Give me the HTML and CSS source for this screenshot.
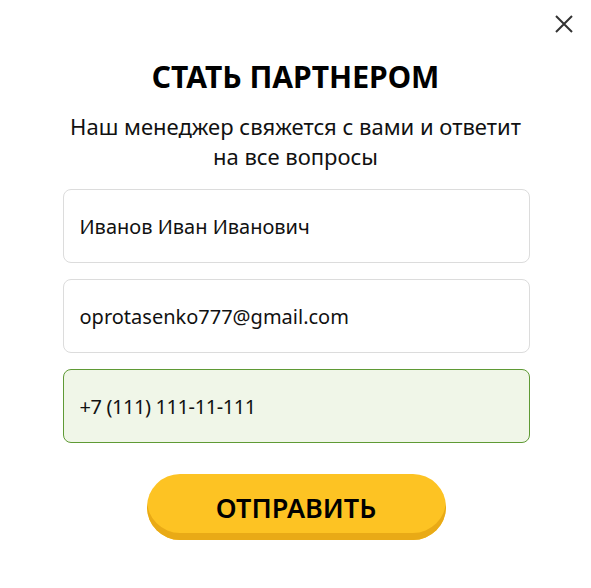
FILE: index.html
```html
<!DOCTYPE html>
<html lang="ru">
<head>
    <meta charset="UTF-8">
    <meta name="viewport" content="width=device-width, initial-scale=1.0">
    <title>Стать партнером</title>
    <link rel="stylesheet" href="styles.css">
</head>
<body>
    <div class="modal">
        <button class="close" aria-label="Закрыть">
            <svg width="18" height="18" viewBox="0 0 18 18">
                <path d="M1 1 L17 17 M17 1 L1 17" stroke="#333" stroke-width="2" fill="none"/>
            </svg>
        </button>

        <h1>СТАТЬ ПАРТНЕРОМ</h1>
        <p class="lead">Наш менеджер свяжется с вами и ответит<br>на все вопросы</p>

        <form class="form">
            <input type="text" class="field" value="Иванов Иван Иванович">
            <input type="text" class="field" value="oprotasenko777@gmail.com">
            <input type="text" class="field valid" value="+7 (111) 111-11-111">
            <button type="button" class="submit">ОТПРАВИТЬ</button>
        </form>
    </div>
</body>
</html>
```

FILE: styles.css
```css
body {
    margin: 0;
    background: #fff;
    font-family: "Noto Sans", "Open Sans", sans-serif;
    color: #111;
}
.modal {
    position: relative;
    width: 591px;
    padding: 57px 0 0;
    box-sizing: border-box;
}
.close {
    position: absolute;
    top: 15px;
    right: 18px;
    background: none;
    border: none;
    padding: 0;
    cursor: pointer;
}
h1 {
    margin: 0;
    text-align: center;
    font-size: 30px;
    line-height: 40px;
    font-weight: 700;
    color: #000;
}
.lead {
    margin: 14px 0 0;
    text-align: center;
    font-size: 22px;
    line-height: 30px;
    color: #111;
}
.form {
    display: flex;
    flex-direction: column;
    align-items: center;
    gap: 16px;
    margin-top: 18px;
    padding-left: 1px;
}
.field {
    width: 467px;
    height: 74px;
    padding: 0 16px;
    box-sizing: border-box;
    border: 1px solid #dcdcdc;
    border-radius: 8px;
    font-family: inherit;
    font-size: 20px;
    color: #111;
    background: #fff;
    outline: none;
}
.field.valid {
    background: #f0f6e8;
    border-color: #5f9a35;
    letter-spacing: -0.4px;
}
.submit {
    margin-top: 15px;
    width: 299px;
    height: 66px;
    border: none;
    border-radius: 33px;
    background: #fdc323;
    box-shadow: inset 0 -7px 0 #e9aa16;
    font-family: inherit;
    font-size: 27px;
    font-weight: 600;
    color: #000;
    cursor: pointer;
}
```
